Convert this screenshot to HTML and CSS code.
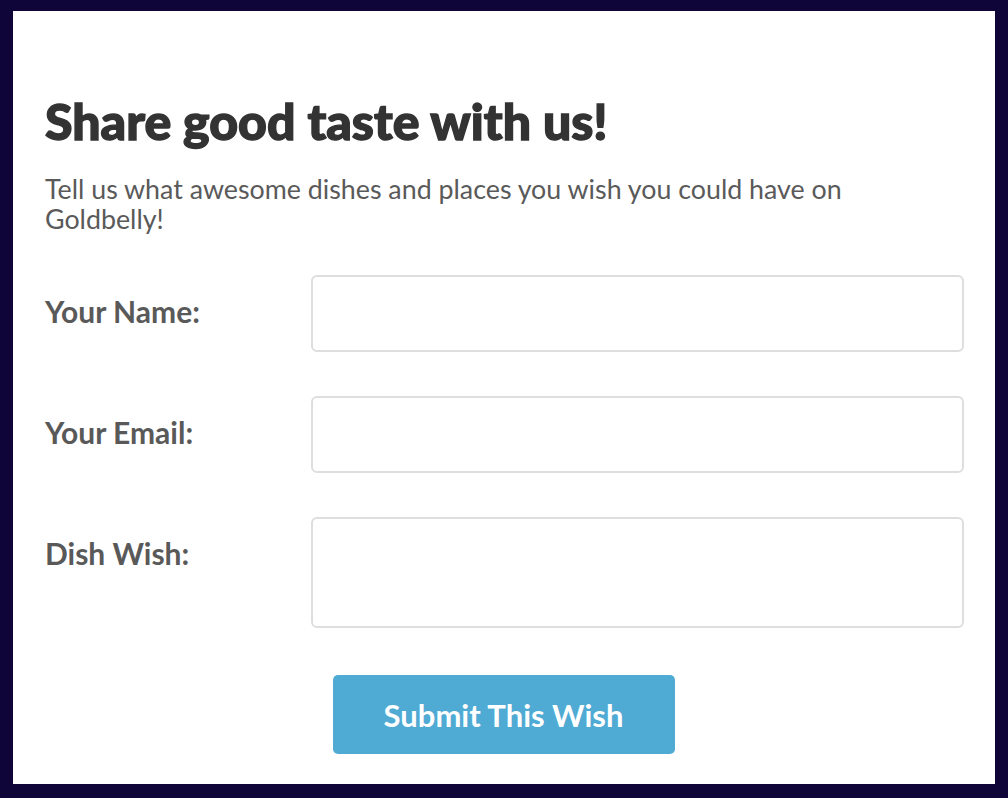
FILE: index.html
```html
<!DOCTYPE html>
<html>
<head>
<meta charset="utf-8">
<link rel="stylesheet" href="styles.css">
</head>
<body>
<div class="card">
  <h1 class="title">Share good taste with us!</h1>
  <p class="intro">Tell us what awesome dishes and places you wish you could have on Goldbelly!</p>
  <form class="form">
    <div class="row">
      <label class="label">Your Name:</label>
      <input class="field" type="text">
    </div>
    <div class="row">
      <label class="label">Your Email:</label>
      <input class="field" type="text">
    </div>
    <div class="row">
      <label class="label">Dish Wish:</label>
      <textarea class="field area"></textarea>
    </div>
    <div class="actions">
      <button class="submit" type="button">Submit This Wish</button>
    </div>
  </form>
</div>
</body>
</html>
```

FILE: styles.css
```css
html, body {
  margin: 0;
  padding: 0;
}
body {
  background: #0f0538;
  padding: 11px 13px 14px 13px;
  height: 798px;
  box-sizing: border-box;
}
.card {
  background: #fff;
  height: 773px;
  box-sizing: border-box;
  padding: 82px 31px 0 32px;
}
.title {
  margin: 0;
  font-family: "Lato", sans-serif;
  font-weight: 900;
  font-size: 50px;
  line-height: 56px;
  color: #333;
  -webkit-text-stroke: 1.4px #333;
}
.intro {
  margin: 25px 0 0 0;
  font-family: "Lato", sans-serif;
  font-size: 26.8px;
  line-height: 30px;
  color: #5a5a5a;
  max-width: 860px;
}
.form {
  margin-top: 41px;
}
.row {
  display: grid;
  grid-template-columns: 266px 1fr;
  margin-bottom: 44px;
}
.label {
  padding-top: 19px;
  font-family: "Lato", sans-serif;
  font-weight: 700;
  font-size: 30px;
  line-height: 34px;
  color: #595959;
}
.field {
  display: block;
  height: 77px;
  box-sizing: border-box;
  border: 2px solid #dedede;
  border-radius: 6px;
  background: #fff;
  margin: 0;
  width: 100%;
}
.area {
  height: 111px;
  resize: none;
}
.actions {
  display: flex;
  justify-content: center;
  margin-top: 47px;
  margin-left: -2px;
}
.submit {
  width: 342px;
  height: 79px;
  background: #4faad4;
  border: none;
  border-radius: 5px;
  color: #fff;
  font-family: "Lato", sans-serif;
  font-weight: 700;
  font-size: 31px;
}
```
